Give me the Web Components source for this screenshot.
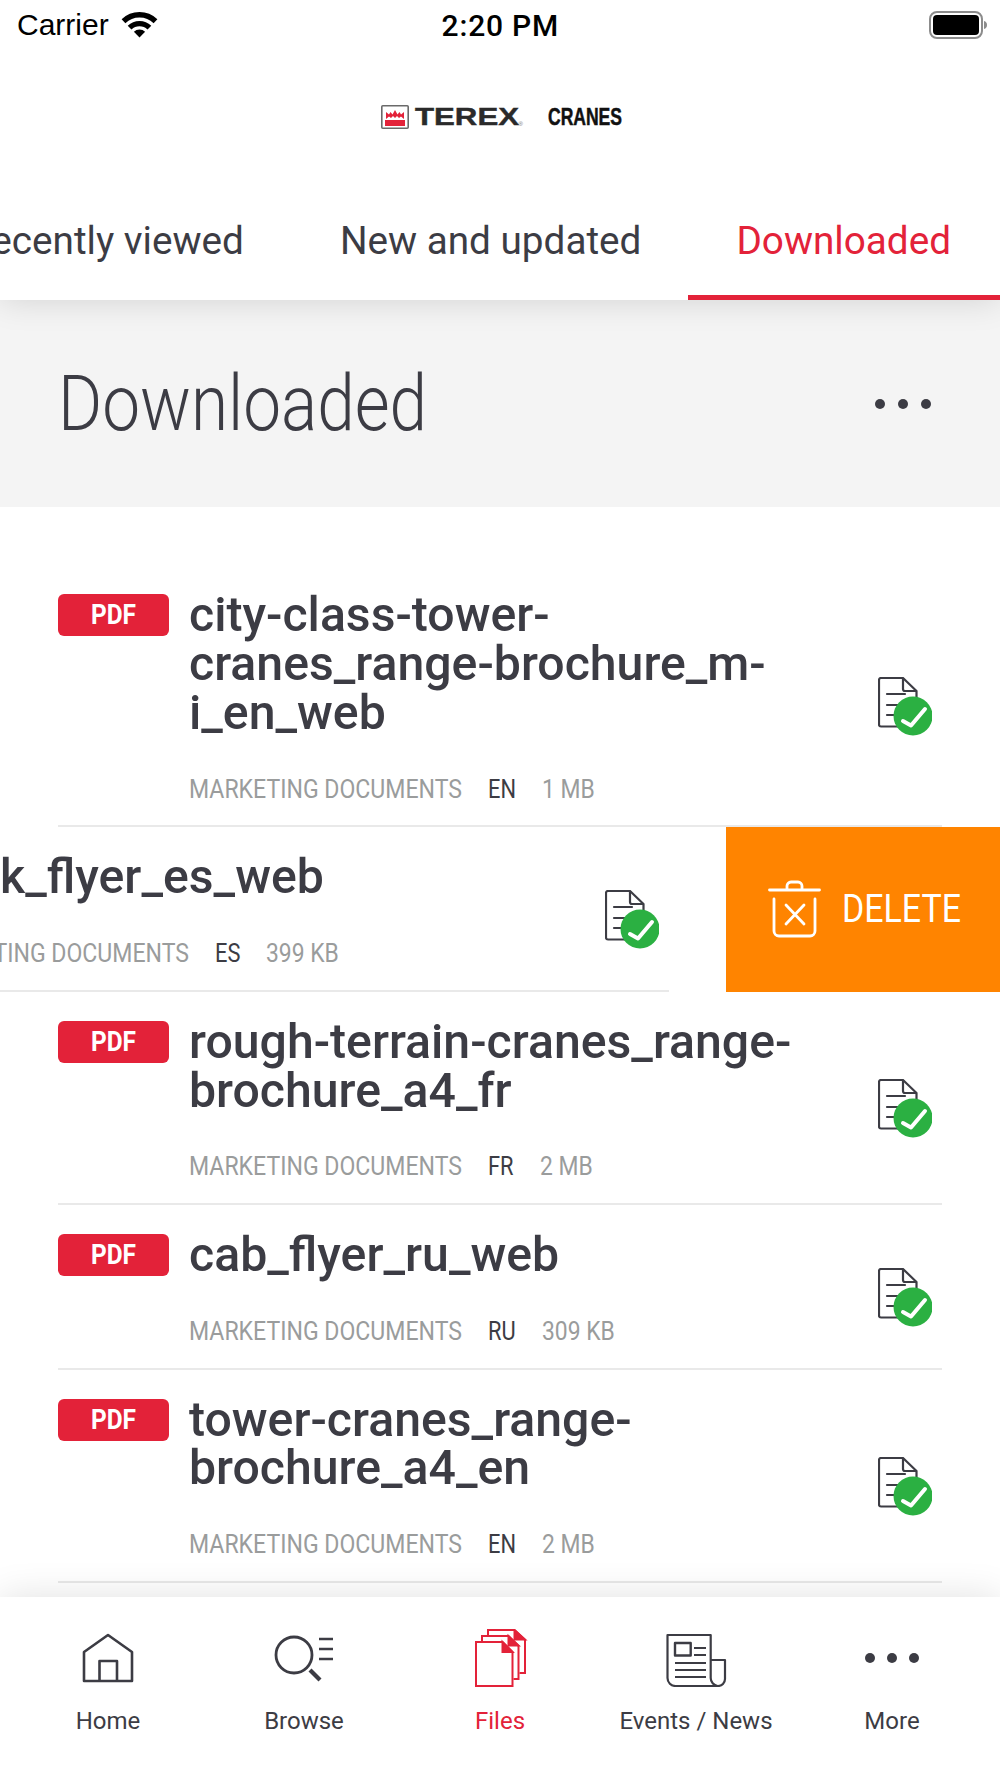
<!DOCTYPE html>
<html lang="en"><head><meta charset="utf-8"><title>Downloaded</title>
<style>
html,body{margin:0;padding:0;background:#fff;height:1778px;overflow:hidden}
body{font-family:Roboto,sans-serif;color:#3c3c44}
</style></head><body>
<app-root></app-root>
<script>
const INK='#3c3c44',RED='#e32239';
function def(name,html,extra){
  customElements.define(name,class extends HTMLElement{
    connectedCallback(){
      if(this.shadowRoot)return;
      const r=this.attachShadow({mode:'open'});
      r.innerHTML=typeof html==='function'?html(this):html;
      if(extra)extra(this);
    }
  });
}
const a=(el,k,d='')=>el.getAttribute(k)??d;

/* text condensed horizontally to a target width or by a ratio */
customElements.define('fit-text',class extends HTMLElement{
  connectedCallback(){
    if(this.shadowRoot)return;
    const r=this.attachShadow({mode:'open'});
    r.innerHTML=`<style>:host{display:inline-block;white-space:nowrap;vertical-align:top}
      span{display:inline-block;transform-origin:0 50%}</style><span><slot></slot></span>`;
    const s=r.querySelector('span');
    const nat=s.getBoundingClientRect().width;
    const w=parseFloat(a(this,'w','0'));
    const k=w?w/nat:parseFloat(a(this,'sx','1'));
    s.style.transform=`scaleX(${k})`;
    this.style.width=(nat*k)+'px';
  }
});

def('status-bar',`<style>
:host{display:flex;align-items:center;height:50px;padding:0 13px 0 17px;color:#000;position:relative;z-index:3;box-sizing:border-box;background:#fff}
.c{font:400 30px "Liberation Sans",sans-serif}
.w{margin-left:12px;margin-top:-2px;display:block}
.t{flex:1;text-align:center;font:500 30px Roboto,sans-serif;letter-spacing:.8px;margin-left:-86px}
svg{display:block}
</style>
<span class="c">Carrier</span>
<svg class="w" width="37" height="28" viewBox="0 0 37 28" fill="none" stroke="#000" stroke-width="5.4">
<path d="M2.5 11.2a23 23 0 0 1 32 0"/><path d="M8.6 17.6a14.2 14.2 0 0 1 19.8 0"/><path d="M18.5 27.5l-5.6-5.7a8 8 0 0 1 11.2 0z" fill="#000" stroke="none"/></svg>
<span class="t">2:20 PM</span>
<svg width="58" height="28" viewBox="0 0 58 28"><rect x="1" y="1" width="52" height="26" rx="7" fill="#fff" stroke="#8c8c8c" stroke-width="2"/><rect x="4" y="4" width="46" height="20" rx="4" fill="#000"/><path d="M55 10c2 .6 3 2 3 4s-1 3.400-3 4z" fill="#8c8c8c"/></svg>`);

def('app-logo',`<style>
:host{display:flex;align-items:center;justify-content:center;height:133px;background:#fff;color:#222;position:relative;z-index:3;padding-left:2px}
svg{display:block}
.te{font:700 24px/24px "Liberation Sans",sans-serif;margin-left:6px;color:#2a2a2a;-webkit-text-stroke:.4px #2a2a2a}
.r{font:400 6px/6px "Liberation Sans",sans-serif;margin:14px 0 0 0;color:#777;width:6px}
.cr{font:700 24px/24px "Liberation Sans",sans-serif;margin-left:23px;color:#111;-webkit-text-stroke:.5px #111}
</style>
<svg width="28" height="24" viewBox="0 0 28 24"><rect x=".8" y=".8" width="26.400" height="22.400" rx="1" fill="#fff" stroke="#6a6a6a" stroke-width="1.600"/><path d="M5 14V7l3 2.500L9.500 7l2 2.500L14 5l2.500 4.500 2-2.500 1.500 2.500L23 7v7l-3-2.500-2 1.500-2-2-2 2-2-2-2 2-2-1.500z" fill="${RED}"/><rect x="4" y="15" width="20" height="6" fill="${RED}"/></svg>
<fit-text class="te" w="104">TEREX</fit-text><span class="r">®</span><fit-text class="cr" w="74">CRANES</fit-text>`);

def('tab-bar',`<style>
:host{display:flex;justify-content:flex-end;height:117px;background:#fff;position:relative;z-index:2;box-shadow:0 0 32px rgba(0,0,0,.14);overflow:visible}
.clip{display:flex;justify-content:flex-end;width:100%;overflow:hidden;background:#fff}
.tab{flex:none;box-sizing:border-box;padding:0 47px 1px 49px;display:flex;align-items:center;font:400 38.700px/44px Roboto,sans-serif;color:${INK};white-space:nowrap}
.on{color:${RED};box-shadow:inset 0 -5px 0 ${RED};padding:0 49px 1px 48px}
</style><div class="clip"><div class="tab">Recently viewed</div><div class="tab">New and updated</div><div class="tab on">Downloaded</div></div>`);

def('section-head',`<style>
:host{display:flex;align-items:center;justify-content:space-between;height:207px;background:#f4f4f4;padding:0 69px 0 58px;box-sizing:border-box}
.h{font:300 78px/90px Roboto,sans-serif;color:${INK}}
svg{display:block}
</style><fit-text class="h" w="369">Downloaded</fit-text>
<svg width="56" height="10" viewBox="0 0 56 10" fill="${INK}"><circle cx="5" cy="5" r="5"/><circle cx="28" cy="5" r="5"/><circle cx="51" cy="5" r="5"/></svg>`);

def('doc-status',`<style>:host{display:block;width:54px;height:59px}svg{display:block}</style>
<svg width="54" height="59" viewBox="0 0 54 59" fill="none" stroke="${INK}" stroke-width="2.200" stroke-linejoin="round">
<path d="M3 1h22l13.500 13v33.500a2 2 0 0 1-2 2H3a2 2 0 0 1-2-2V3a2 2 0 0 1 2-2z"/><path d="M25 1v11a2 2 0 0 0 2 2h11.500"/>
<path d="M9 17h18M9 28h18M9 38h18" stroke-linecap="round"/>
<circle cx="35" cy="39" r="19.500" fill="#2bb042" stroke="none"/>
<path d="M25 44l8 4.500L47 32" stroke="#fff" stroke-width="4" stroke-linecap="round" fill="none"/></svg>`);

def('file-row',el=>{
  const swiped=el.hasAttribute('swiped');
  return `<style>
:host{display:block;position:relative;${swiped?'width:1000px;overflow:hidden;':''}}
.in{display:flex;margin:0 58px;border-bottom:2px solid #e9e9e9;padding:26px 0 21.800px;box-sizing:border-box;${swiped?'margin-left:-215px;margin-right:331px;':''}}
.badge{flex:none;width:111px;height:42px;margin-top:3px;border-radius:6px;background:${RED};color:#fff;display:flex;align-items:center;justify-content:center;font:700 28px/42px Roboto,sans-serif}
.col{width:640px;flex:none;margin-left:20px}
.title{font:500 48.200px/48.700px Roboto,sans-serif;color:${INK};${swiped?'padding-left:84px;white-space:nowrap;':''}}
.meta{display:flex;margin-top:36px;font:400 26px/30px Roboto,sans-serif;color:#9a9c9c}
.lang{color:${INK};margin-left:26px}
.size{margin-left:26px}
doc-status{margin-left:auto;margin-right:10px;align-self:center;margin-top:18px;flex:none}
.del{position:absolute;left:726px;top:0;bottom:0;right:0;background:#ff8400;color:#fff;display:flex;align-items:center;padding-left:42px;box-sizing:border-box}
.del svg{display:block;margin-top:-1px}
.del fit-text{font:400 38px/44px Roboto,sans-serif;margin:-2px 0 0 20px}
</style>
<div class="in"><div class="badge"><fit-text w="45">PDF</fit-text></div>
<div class="col"><div class="title">${a(el,'name')}</div>
<div class="meta"><fit-text w="273">MARKETING DOCUMENTS</fit-text><fit-text class="lang" sx=".84">${a(el,'lang')}</fit-text><fit-text class="size" sx=".88">${a(el,'size')}</fit-text></div></div>
<doc-status></doc-status></div>
${swiped?`<div class="del"><svg width="54" height="58" viewBox="0 0 54 58" fill="none" stroke="#fff" stroke-width="2.800" stroke-linecap="round"><path d="M1.500 10h50"/><path d="M19 9V6a4 4 0 0 1 4-4h7a4 4 0 0 1 4 4v3"/><path d="M6 19v32a5 5 0 0 0 5 5h31a5 5 0 0 0 5-5V19"/><path d="M18 25l18 19M36 25L18 44"/></svg><fit-text w="119">DELETE</fit-text></div>`:''}`;
});

def('nav-item',el=>`<style>
:host{display:flex;flex-direction:column;align-items:center;flex:1 1 0;color:${el.hasAttribute('on')?RED:INK}}
.i{height:58px;display:block}
::slotted(svg){display:block}
.l{font:400 24px/30px Roboto,sans-serif;margin-top:19px;white-space:nowrap}
</style><div class="i"><slot></slot></div><div class="l">${a(el,'label')}</div>`);

def('nav-bar',`<style>
:host{display:flex;height:181px;padding:32px 10px 0;box-sizing:border-box;background:#fff;position:relative;z-index:2;box-shadow:0 0 36px rgba(0,0,0,.12)}
</style><slot></slot>`);

def('app-root',`<style>
:host{display:flex;flex-direction:column;height:1778px;width:1000px;overflow:hidden;background:#fff}
.list{flex:1;min-height:0;overflow:hidden;padding-top:58.400px}
</style>
<status-bar></status-bar><app-logo></app-logo><tab-bar></tab-bar><section-head></section-head>
<div class="list">
<file-row name="city-class-tower-cranes_range-brochure_m-i_en_web" lang="EN" size="1 MB"></file-row>
<file-row swiped name="k_flyer_es_web" lang="ES" size="399 KB"></file-row>
<file-row name="rough-terrain-cranes_range-brochure_a4_fr" lang="FR" size="2 MB"></file-row>
<file-row name="cab_flyer_ru_web" lang="RU" size="309 KB"></file-row>
<file-row name="tower-cranes_range-brochure_a4_en" lang="EN" size="2 MB"></file-row>
</div>
<nav-bar>
<nav-item label="Home"><svg width="70" height="58" viewBox="0 0 70 58" fill="none" stroke="currentColor" stroke-width="2.600" stroke-linejoin="round"><path d="M35 6L11 23v29h48V23z"/><path d="M26.500 52V32H44v20"/></svg></nav-item>
<nav-item label="Browse"><svg width="70" height="58" viewBox="0 0 70 58" fill="none" stroke="currentColor" stroke-width="2.800"><circle cx="25" cy="26" r="18"/><path d="M41 41l10 10" stroke-width="4.200"/><path d="M50 10h14M50 20h14M50 30h14" stroke-width="2.400"/></svg></nav-item>
<nav-item on label="Files"><svg width="70" height="58" viewBox="0 0 70 58" fill="none" stroke="currentColor" stroke-width="2"><path d="M11 13h26.500l10 10v34H11z"/><path d="M37.500 13v10h10z" fill="currentColor"/><path d="M17 12V7h26.500l10 10v33h-5"/><path d="M43.500 7v9.500h10z" fill="currentColor"/><path d="M23 6V1h26.500L60 11v33h-5.500"/><path d="M49.500 1v9.500H60z" fill="currentColor"/></svg></nav-item>
<nav-item label="Events / News"><svg width="70" height="58" viewBox="0 0 70 58" fill="none" stroke="currentColor" stroke-width="2.200" stroke-linejoin="round"><path d="M6.500 6h43.200v43a8 8 0 0 0 7 8H14.500a8 8 0 0 1-8-8z"/><path d="M49.700 31H64v19a7 7 0 0 1-7 7"/><rect x="14" y="14" width="15.700" height="12.500" stroke-width="2.400"/><path d="M33 19h12M33 26h12M14 34h31M14 41h31M14 48h31"/></svg></nav-item>
<nav-item label="More"><svg width="70" height="58" viewBox="0 0 70 58" fill="currentColor"><circle cx="13" cy="29" r="5"/><circle cx="35" cy="29" r="5"/><circle cx="57" cy="29" r="5"/></svg></nav-item>
</nav-bar>`);
</script>
</body></html>
